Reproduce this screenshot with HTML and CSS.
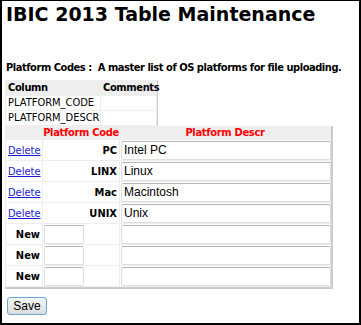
FILE: index.html
```html
<!DOCTYPE html>
<html>
<head>
<meta charset="utf-8">
<link rel="stylesheet" href="styles.css">
</head>
<body>
<div class="frame">
  <h1 class="title">IBIC 2013 Table Maintenance</h1>
  <p class="desc">Platform Codes :&nbsp; A master list of OS platforms for file uploading.</p>
  <table class="cols">
    <colgroup><col class="c-name"><col class="c-comm"></colgroup>
    <tr class="head"><th>Column</th><th>Comments</th></tr>
    <tr><td>PLATFORM_CODE</td><td></td></tr>
    <tr><td>PLATFORM_DESCR</td><td></td></tr>
  </table>
  <table class="grid">
    <colgroup><col class="g-act"><col class="g-code"><col class="g-desc"></colgroup>
    <tr class="head"><th></th><th>Platform Code</th><th>Platform Descr</th></tr>
    <tr><td class="act"><a href="#">Delete</a></td><td class="code">PC</td><td><input class="in-desc" type="text" value="Intel PC"></td></tr>
    <tr><td class="act"><a href="#">Delete</a></td><td class="code">LINX</td><td><input class="in-desc" type="text" value="Linux"></td></tr>
    <tr><td class="act"><a href="#">Delete</a></td><td class="code">Mac</td><td><input class="in-desc" type="text" value="Macintosh"></td></tr>
    <tr><td class="act"><a href="#">Delete</a></td><td class="code">UNIX</td><td><input class="in-desc" type="text" value="Unix"></td></tr>
    <tr><td class="new">New</td><td><input class="in-code" type="text"></td><td><input class="in-desc" type="text"></td></tr>
    <tr><td class="new">New</td><td><input class="in-code" type="text"></td><td><input class="in-desc" type="text"></td></tr>
    <tr><td class="new">New</td><td><input class="in-code" type="text"></td><td><input class="in-desc" type="text"></td></tr>
  </table>
  <button class="save" type="button">Save</button>
</div>
</body>
</html>
```
FILE: styles.css
```css
html, body {
  margin: 0;
  padding: 0;
  background: #fff;
}
.frame {
  box-sizing: border-box;
  width: 361px;
  height: 325px;
  border: 2px solid #000;
  border-top-width: 1px;
  padding: 0 3px;
  font-family: "DejaVu Sans Condensed", "DejaVu Sans", sans-serif;
  font-size: 11px;
  color: #000;
  overflow: hidden;
}
.title {
  margin: 0 0 0 1px;
  padding-top: 1px;
  font-family: "DejaVu Sans", Verdana, sans-serif;
  font-size: 19px;
  line-height: 24px;
  font-weight: bold;
  white-space: nowrap;
}
.desc {
  margin: 35px 0 0 1px;
  font-weight: bold;
  font-size: 11px;
  line-height: 13px;
  letter-spacing: -0.45px;
  white-space: nowrap;
}
.cols {
  margin-top: 6px;
  border-collapse: separate;
  border-spacing: 1px;
  background: #eee;
  table-layout: fixed;
  width: 153px;
  border-right: 1px solid #ccc;
  border-bottom: 1px solid #ccc;
}
.c-name { width: 94px; }
.cols th, .cols td {
  padding: 1px 2px;
  line-height: 12px;
  text-align: left;
  white-space: nowrap;
}
.cols th { font-weight: bold; background: #eee; letter-spacing: -0.35px; }
.cols td { background: #fff; }
.grid {
  margin-top: -1px;
  border-collapse: separate;
  border-spacing: 1px;
  background: #eee;
  table-layout: fixed;
  width: 328px;
  border-right: 2px solid #ccc;
  border-bottom: 2px solid #ccc;
}
.g-act { width: 36px; }
.g-code { width: 76px; }
.grid th {
  background: #eee;
  color: #f00;
  font-weight: bold;
  text-align: center;
  padding: 0;
  line-height: 12px;
  white-space: nowrap;
  letter-spacing: -0.3px;
}
.grid td {
  background: #fff;
  padding: 0 1px;
  height: 20px;
  vertical-align: middle;
}
.grid .act { padding-left: 2px; }
.grid .act a { color: #1a1ad6; text-decoration: underline; }
.grid .code, .grid .new {
  font-weight: bold;
  text-align: right;
  padding-right: 2px;
}
input {
  box-sizing: border-box;
  height: 19px;
  margin: 0;
  padding: 1px 2px;
  border: 1px solid #ddd;
  border-top-color: #b5b5b5;
  border-radius: 2px;
  font-family: "Liberation Sans", Arial, sans-serif;
  font-size: 12px;
  color: #000;
  background: #fff;
  display: block;
}
.in-desc { width: 210px; }
.in-code { width: 40px; }
.save {
  display: block;
  margin-top: 8px;
  margin-left: 2px;
  width: 40px;
  height: 18px;
  padding: 0;
  border: 1px solid #6aa6d8;
  border-radius: 3px;
  background: linear-gradient(#f6f6f6, #dcdcdc);
  font-family: "Liberation Sans", Arial, sans-serif;
  font-size: 12px;
  color: #000;
}
```
